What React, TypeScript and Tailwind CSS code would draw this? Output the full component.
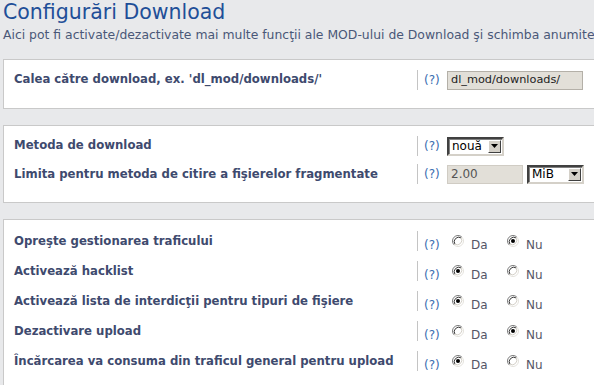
import React from 'react';

const font = { fontFamily: '"DejaVu Sans", Verdana, sans-serif' };

const Radio: React.FC<{ checked?: boolean }> = ({ checked }) => (
  <svg width="12" height="12" viewBox="0 0 12 12" className="shrink-0">
    <circle cx="6" cy="6" r="5.5" fill="#fff" />
    <path d="M2.11 9.89 A5.5 5.5 0 0 1 9.89 2.11" fill="none" stroke="#7b7b7b" strokeWidth="1" />
    <path d="M9.89 2.11 A5.5 5.5 0 0 1 2.11 9.89" fill="none" stroke="#e4e2dc" strokeWidth="1" />
    <path d="M2.9 9.1 A4.5 4.5 0 0 1 9.1 2.9" fill="none" stroke="#3c3c3c" strokeWidth="1" />
    <path d="M9.1 2.9 A4.5 4.5 0 0 1 2.9 9.1" fill="none" stroke="#d4d0c8" strokeWidth="1" />
    {checked && <circle cx="6" cy="6" r="2" fill="#000" />}
  </svg>
);

const SelectBox: React.FC<{ value: string; width: string }> = ({ value, width }) => (
  <div className={`${width} h-[19px] flex items-center bg-white border-2 border-t-[#404040] border-l-[#404040] border-r-[#d4d0c8] border-b-[#d4d0c8] shadow-[inset_1px_1px_0_#808080]`}>
    <span className="flex-1 pl-[3px] text-[12px] leading-none text-black">{value}</span>
    <div className="w-[13px] h-[13px] mr-[1px] bg-[#d4d0c8] border border-t-white border-l-white border-r-[#404040] border-b-[#404040] flex items-center justify-center">
      <svg width="7" height="4" viewBox="0 0 7 4"><path d="M0 0h7L3.5 4z" fill="#000" /></svg>
    </div>
  </div>
);

const Help: React.FC<{ className?: string }> = ({ className }) => (
  <span className={`text-[12px] text-[#3a6cb0] ${className ?? ''}`}>(?)</span>
);

const Row: React.FC<{ label: string; children: React.ReactNode }> = ({ label, children }) => (
  <div className="flex items-center h-[20px]">
    <div className="w-[413px] pl-[10px] text-[11.7px] font-bold text-[#3e4a6e] whitespace-nowrap">{label}</div>
    <div className="h-[20px] border-l border-[#c4c4c4] pl-[6px] flex items-center">{children}</div>
  </div>
);

const RadioRow: React.FC<{ label: string; yes: boolean }> = ({ label, yes }) => (
  <Row label={label}>
    <Help className="w-[28px] pt-[8px]" />
    <Radio checked={yes} />
    <span className="ml-[7px] w-[36px] pt-[8px] text-[12px] text-[#555566]">Da</span>
    <Radio checked={!yes} />
    <span className="ml-[7px] pt-[8px] text-[12px] text-[#555566]">Nu</span>
  </Row>
);

export default function App() {
  return (
    <div className="w-[594px] h-[385px] overflow-hidden bg-[#e8e9eb] pl-[3px]" style={font}>
      <h1 className="text-[20.5px] leading-[24px] text-[#1f4f98] whitespace-nowrap">Configurări Download</h1>
      <p className="text-[12.4px] leading-[15px] mt-[3px] text-[#4a5878] whitespace-nowrap">
        Aici pot fi activate/dezactivate mai multe funcţii ale MOD-ului de Download şi schimba anumite
      </p>

      <div className="mt-[17px] w-[640px] bg-white border border-[#c9c9c9] pt-[10px] pb-[18px]">
        <Row label="Calea către download, ex. 'dl_mod/downloads/'">
          <Help className="w-[23px]" />
          <div className="w-[136px] h-[19px] bg-[#e2dfd8] border border-[#b4b0a8] flex items-center pl-[3px] text-[11.3px] text-[#222]">
            dl_mod/downloads/
          </div>
        </Row>
      </div>

      <div className="mt-[16px] w-[640px] bg-white border border-[#c9c9c9] pt-[10px] pb-[18px] flex flex-col gap-[8.3px]">
        <Row label="Metoda de download">
          <Help className="w-[23px]" />
          <SelectBox value="nouă" width="w-[57px]" />
        </Row>
        <Row label="Limita pentru metoda de citire a fişierelor fragmentate">
          <Help className="w-[23px]" />
          <div className="w-[76px] h-[19px] bg-[#e2dfd8] border border-[#d0ccc4] flex items-center pl-[3px] text-[12px] text-[#555]">
            2.00
          </div>
          <div className="ml-[4px]">
            <SelectBox value="MiB" width="w-[57px]" />
          </div>
        </Row>
      </div>

      <div className="mt-[16px] w-[640px] bg-white border border-[#c9c9c9] pt-[11px] pb-[20px] flex flex-col gap-[10px]">
        <RadioRow label="Opreşte gestionarea traficului" yes={false} />
        <RadioRow label="Activează hacklist" yes={true} />
        <RadioRow label="Activează lista de interdicţii pentru tipuri de fişiere" yes={true} />
        <RadioRow label="Dezactivare upload" yes={false} />
        <RadioRow label="Încărcarea va consuma din traficul general pentru upload" yes={true} />
      </div>
    </div>
  );
}
